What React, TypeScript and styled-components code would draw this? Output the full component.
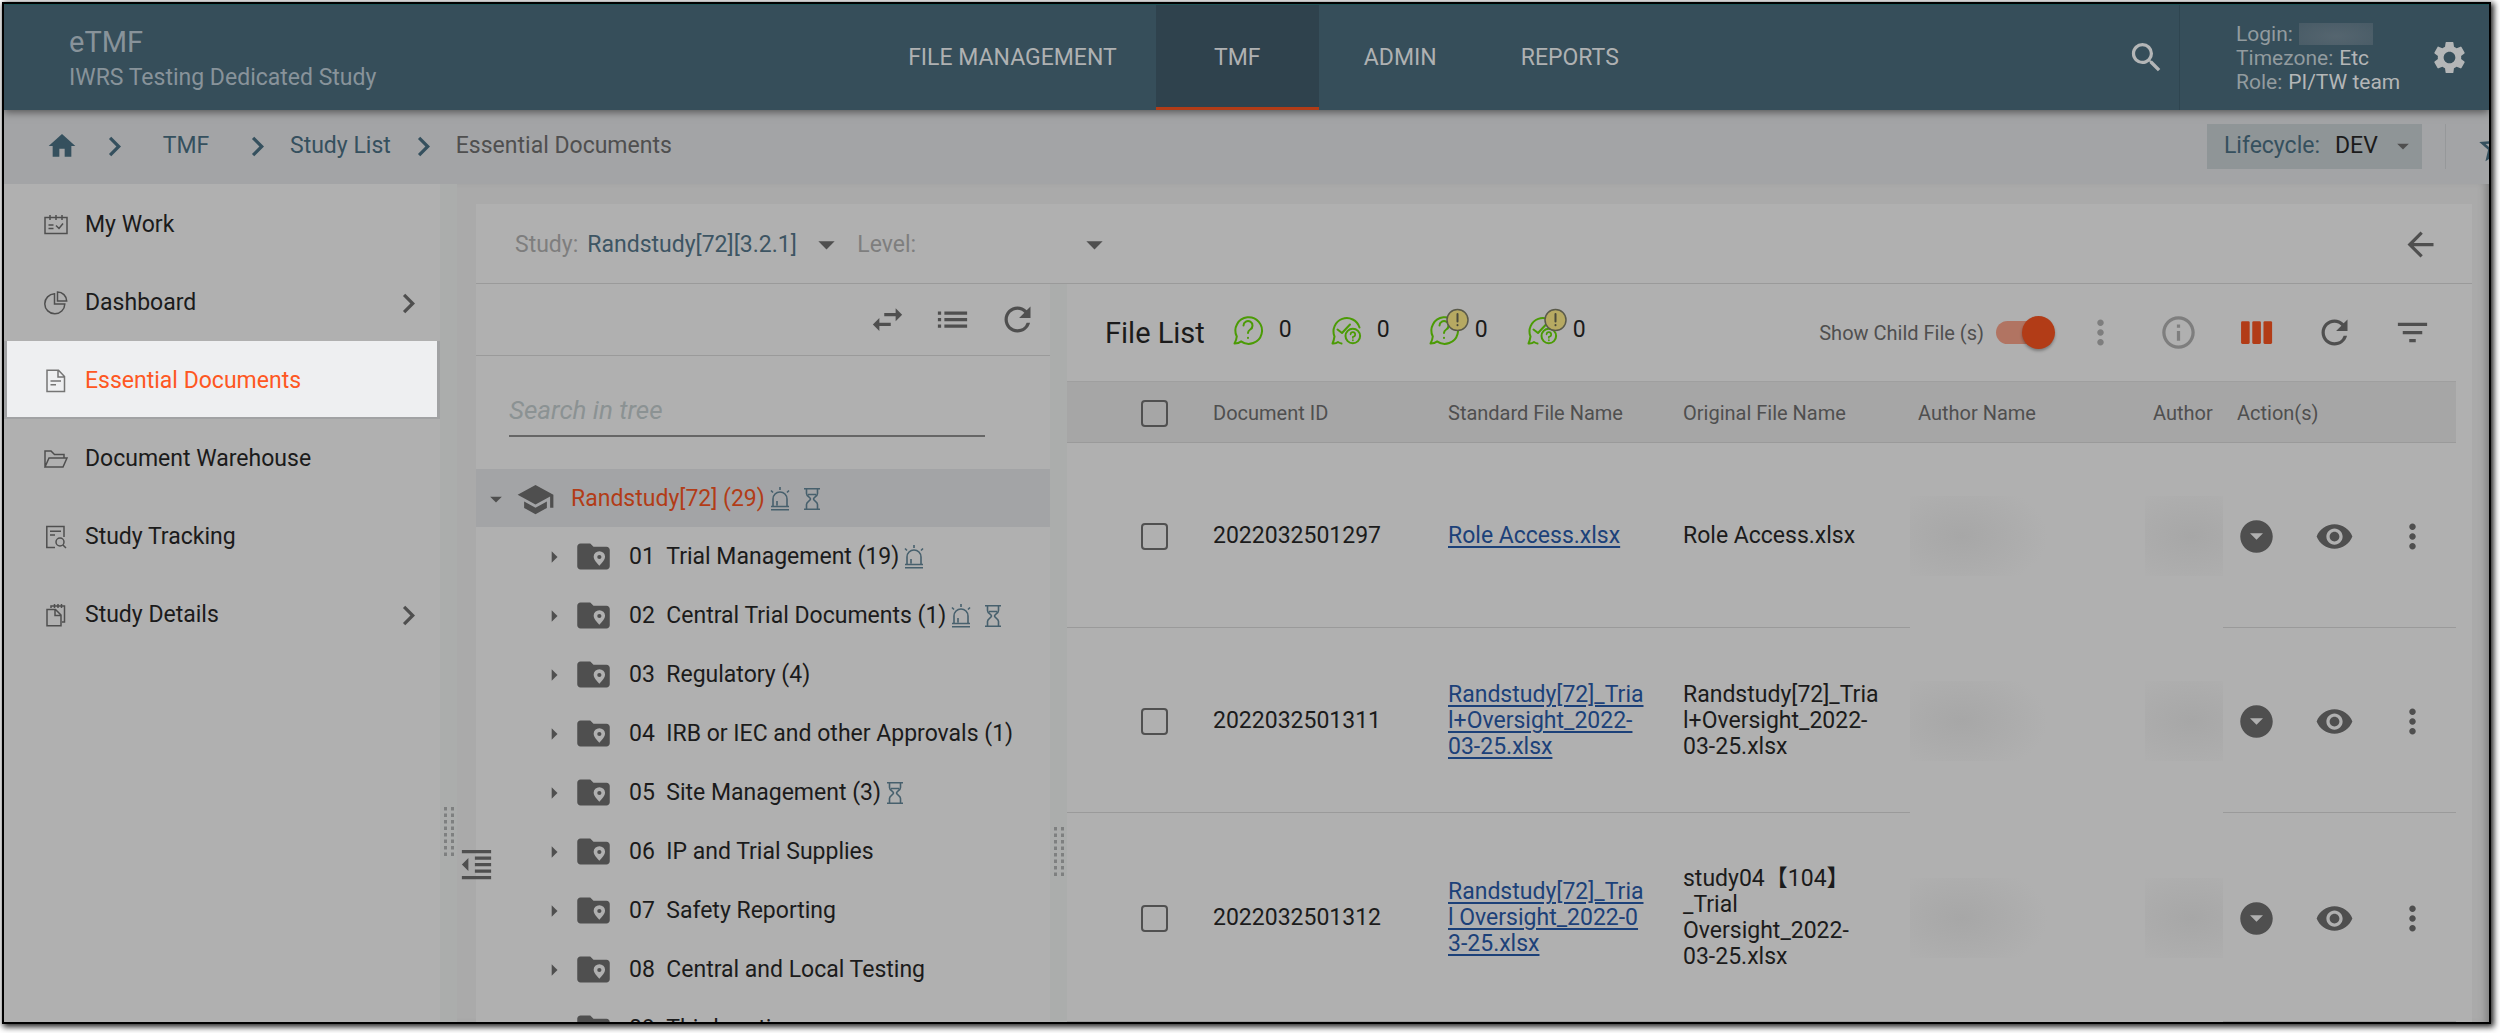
import React from 'react';
import styled, { createGlobalStyle, css } from 'styled-components';
import {
  MdArrowBack,
  MdArrowDropDown,
  MdArrowDropDownCircle,
  MdArrowRight,
  MdChevronRight,
  MdFilterList,
  MdFormatIndentDecrease,
  MdHome,
  MdInfoOutline,
  MdList,
  MdMoreVert,
  MdRefresh,
  MdSchool,
  MdSearch,
  MdSettings,
  MdStarBorder,
  MdSwapHoriz,
  MdVisibility,
} from 'react-icons/md';

const color = {
  header: '#364e5a',
  headerActive: '#2f424d',
  bar: '#a3a4a6',
  canvas: '#aaaaaa',
  surface: '#b0b0b0',
  splitter: '#abadac',
  tableHead: '#a6a6a6',
  line: '#9a9a9a',
  text: '#1b1b1b',
  muted: '#4f4f4f',
  faint: '#7e7e7e',
  teal: '#35505e',
  orange: '#b23c17',
  link: '#1c4179',
  green: '#4b9b05',
};

const ICON = 39;
const CARET = 28;

const GlobalStyle = createGlobalStyle`
  *, *::before, *::after { box-sizing: border-box; }
  body {
    margin: 0;
    background: #ffffff;
    overflow: hidden;
  }
  body, button, input, select {
    font-family: Roboto, "Noto Sans CJK SC", sans-serif;
    font-size: 23px;
    line-height: 26px;
    color: ${color.text};
  }
  ul, ol { list-style: none; margin: 0; padding: 0; }
  svg { display: block; flex: none; }
`;

/* ---------- shell ---------- */

const Frame = styled.div`
  display: flex;
  flex-direction: column;
  height: calc(100vh - 11px);
  margin: 2px 9px 9px 2px;
  border: 2px solid #000000;
  background: ${color.canvas};
  box-shadow: 2px 2px 6px 1px rgba(0, 0, 0, 0.85);
  overflow: hidden;
`;

const Header = styled.header`
  flex: none;
  position: relative;
  z-index: 1;
  display: grid;
  grid-template-columns: 51fr auto 49fr;
  height: 106px;
  background: ${color.header};
  border-top: 1px solid #1f5558;
  box-shadow: 0 2px 8px rgba(0, 0, 0, 0.5);
`;

const Brand = styled.div`
  display: flex;
  flex-direction: column;
  justify-content: center;
  padding: 3px 0 0 65px;
  color: #88939a;
`;

const BrandName = styled.div`
  font-size: 29px;
  line-height: 38px;
`;

const BrandStudy = styled.div`
  line-height: 34px;
`;

const Nav = styled.nav`
  display: flex;
`;

const NavLink = styled.a<{ $active?: boolean }>`
  display: flex;
  align-items: center;
  justify-content: center;
  min-width: 163px;
  padding: 4px 39px 0;
  border-bottom: 3px solid transparent;
  color: #afb1b2;
  text-decoration: none;
  ${(p) =>
    p.$active &&
    css`
      background: ${color.headerActive};
      border-bottom-color: ${color.orange};
    `}
`;

const HeaderTools = styled.div`
  display: flex;
  align-items: stretch;
  justify-content: flex-end;
  padding-right: 20px;
`;

const IconButton = styled.button<{ $tone?: string }>`
  display: flex;
  align-items: center;
  justify-content: center;
  flex: none;
  margin: 0;
  padding: 0;
  border: 0;
  background: none;
  color: ${(p) => p.$tone ?? color.muted};
  cursor: pointer;
`;

const UserInfo = styled.div`
  display: flex;
  flex-direction: column;
  justify-content: center;
  min-width: 251px;
  margin-left: 13px;
  padding-left: 56px;
  border-left: 1px solid #2f4550;
  font-size: 21px;
  line-height: 24px;
  color: #b4b6b7;
`;

const UserLine = styled.div`
  display: flex;
  gap: 6px;
  align-items: center;
`;

const UserKey = styled.span`
  color: #929b9f;
`;

const Redacted = styled.span`
  width: 74px;
  height: 22px;
  background: radial-gradient(ellipse at 50% 60%, #55656f, #46596400), #485b66;
`;

/* ---------- breadcrumb ---------- */

const CrumbBar = styled.div`
  flex: none;
  display: flex;
  align-items: center;
  justify-content: space-between;
  height: 74px;
  padding-bottom: 2px;
  background: ${color.bar};
  overflow: hidden;
`;

const Crumbs = styled.ol`
  display: flex;
  align-items: center;
  padding-left: 42px;
  color: ${color.teal};
`;

const Crumb = styled.li<{ $wide?: boolean; $current?: boolean }>`
  display: flex;
  justify-content: center;
  min-width: ${(p) => (p.$wide ? '104px' : '0')};
  padding: 0 13px;
  color: ${(p) => (p.$current ? color.muted : color.teal)};

  a {
    color: inherit;
    text-decoration: none;
  }
`;

const HomeCrumb = styled.li`
  padding-right: 17px;

  a {
    color: inherit;
  }
`;

const CrumbTools = styled.div`
  display: flex;
  align-items: center;
  margin-right: -26px;
`;

const Lifecycle = styled.label`
  display: flex;
  align-items: center;
  gap: 15px;
  height: 45px;
  padding: 0 5px 0 17px;
  background: #8f9597;
  color: ${color.teal};
`;

const Divider = styled.span`
  width: 1px;
  height: 45px;
  margin: 0 30px 0 23px;
  background: #96989a;
`;

const SelectBox = styled.span<{ $width: number }>`
  display: grid;
  align-items: center;
  width: ${(p) => p.$width}px;

  select,
  svg {
    grid-area: 1 / 1;
  }

  svg {
    justify-self: end;
    pointer-events: none;
    color: ${color.muted};
  }
`;

const Select = styled.select<{ $tone?: string }>`
  width: 100%;
  height: 39px;
  margin: 0;
  padding: 0;
  border: 0;
  appearance: none;
  background: none;
  color: ${(p) => p.$tone ?? color.text};
`;

/* ---------- side menu ---------- */

const Body = styled.div`
  flex: 1;
  display: flex;
  min-height: 0;
`;

const Side = styled.nav`
  flex: none;
  width: 436px;
  padding-top: 1px;
  background: ${color.surface};
`;

const SideItem = styled.li<{ $active?: boolean }>`
  height: 78px;
  padding: 0 3px 2px;
  background: ${(p) => (p.$active ? '#a1a2a4' : 'none')};
`;

const SideLink = styled.a<{ $active?: boolean }>`
  display: flex;
  align-items: center;
  height: 100%;
  padding: 4px 9px 0 37px;
  gap: 17px;
  color: ${(p) => (p.$active ? '#fe5722' : color.text)};
  background: ${(p) => (p.$active ? '#eeeff1' : 'none')};
  text-decoration: none;

  svg {
    color: ${(p) => (p.$active ? '#757575' : color.muted)};
  }
`;

const SideLabel = styled.span`
  flex: 1;
`;

const Splitter = styled.div<{ $bottom: number }>`
  flex: none;
  display: flex;
  align-items: flex-end;
  justify-content: center;
  width: 17px;
  padding-bottom: ${(p) => p.$bottom}px;
  background: ${color.splitter};
`;

/* ---------- content ---------- */

const Content = styled.main`
  flex: 1;
  position: relative;
  display: flex;
  min-width: 0;
  padding: 20px 17px 0 19px;
  box-shadow: inset -8px 0 10px -6px rgba(0, 0, 0, 0.3);
`;

const CollapseButton = styled(IconButton)`
  position: absolute;
  left: 0;
  bottom: 138px;
`;

const Panel = styled.section`
  flex: 1;
  display: flex;
  flex-direction: column;
  min-width: 0;
  background: ${color.surface};
`;

const StudyBar = styled.div`
  flex: none;
  display: flex;
  align-items: center;
  height: 80px;
  padding: 2px 32px 0 39px;
  border-bottom: 1px solid ${color.line};
`;

const Field = styled.label`
  display: flex;
  align-items: center;
  gap: 9px;
  margin-right: 11px;
  color: ${color.faint};
`;

const BackSlot = styled.div`
  margin-left: auto;
`;

const Columns = styled.div`
  flex: 1;
  display: flex;
  min-height: 0;
`;

const TreePane = styled.div`
  flex: none;
  width: 574px;
  overflow: hidden;
`;

const TreeTools = styled.div`
  display: flex;
  align-items: center;
  justify-content: flex-end;
  gap: 26px;
  height: 72px;
  padding-right: 13px;
  border-bottom: 1px solid ${color.line};
`;

const TreeSearch = styled.div`
  padding: 29px 65px 32px 33px;
`;

const SearchInput = styled.input`
  display: block;
  width: 100%;
  height: 52px;
  padding: 0;
  border: 0;
  border-bottom: 2px solid #666666;
  background: none;
  font-size: 26px;
  outline: none;

  &::placeholder {
    color: #8b9293;
    font-style: italic;
    opacity: 1;
  }
`;

const TreeRow = styled.div<{ $root?: boolean }>`
  display: flex;
  align-items: center;
  height: ${(p) => (p.$root ? 58 : 59)}px;
  padding: ${(p) => (p.$root ? '2px 0 0 6px' : '0 0 0 64px')};
  background: ${(p) => (p.$root ? color.bar : 'none')};
  color: ${(p) => (p.$root ? color.orange : color.text)};
  white-space: nowrap;

  svg {
    color: ${color.muted};
  }
`;

const TreeIcon = styled.span`
  margin: 0 16px 0 6px;
`;

const TreeMarks = styled.span`
  display: flex;
  gap: 13px;
  margin-left: 5px;

  svg {
    color: #47606d;
  }
`;

/* ---------- file list ---------- */

const FilePane = styled.div`
  flex: 1;
  min-width: 0;
  overflow: hidden;
`;

const FileTools = styled.div`
  display: flex;
  align-items: center;
  height: 97px;
  padding: 0 40px 0 38px;
`;

const FileTitle = styled.h2`
  margin: 0 28px 0 0;
  font-size: 29px;
  line-height: 34px;
  font-weight: 400;
`;

const QueryCounts = styled.ul`
  display: flex;
  gap: 39px;
  flex: 1;
  padding-bottom: 6px;
`;

const QueryCount = styled.li`
  display: flex;
  align-items: center;
  gap: 16px;
`;

const BubbleIcon = styled.svg`
  overflow: visible;
  fill: none;
  stroke: ${color.green};
  stroke-width: 2;
  stroke-linecap: round;
  stroke-linejoin: round;
`;

const ChildToggle = styled.label`
  display: flex;
  align-items: center;
  gap: 12px;
  margin-right: 26px;
  font-size: 20px;
  color: ${color.muted};
`;

const Switch = styled.input`
  position: relative;
  width: 59px;
  height: 33px;
  margin: 0;
  appearance: none;

  &::before {
    content: '';
    position: absolute;
    inset: 5px 2px 5px 0;
    border-radius: 12px;
    background: #b17462;
  }

  &::after {
    content: '';
    position: absolute;
    top: 0;
    right: 0;
    width: 33px;
    height: 33px;
    border-radius: 50%;
    background: ${color.orange};
    box-shadow: 0 2px 3px rgba(0, 0, 0, 0.3);
  }
`;

const ToolGroup = styled.div`
  display: flex;
  gap: 39px;
`;

const TableWrap = styled.div`
  padding-right: 16px;
`;

const Table = styled.table`
  width: 100%;
  table-layout: fixed;
  border-collapse: separate;
  border-spacing: 0;
`;

const Th = styled.th<{ $width?: number; $pad?: number }>`
  width: ${(p) => (p.$width ? `${p.$width}px` : 'auto')};
  height: 62px;
  padding: 2px 0 0 ${(p) => p.$pad ?? 8}px;
  background: ${color.tableHead};
  border-top: 1px solid #9f9f9f;
  border-bottom: 1px solid ${color.line};
  color: ${color.muted};
  font-size: 20px;
  font-weight: 400;
  text-align: left;
  white-space: nowrap;
`;

const Td = styled.td<{ $pad?: number; $blank?: boolean }>`
  height: 185px;
  padding: 53px 0 51px ${(p) => p.$pad ?? 8}px;
  border-bottom: 1px solid ${(p) => (p.$blank ? 'transparent' : color.line)};
  vertical-align: middle;
  white-space: pre-line;
`;

const Check = styled.input`
  display: block;
  width: 27px;
  height: 27px;
  margin: 0;
  appearance: none;
  border: 2px solid #505050;
  border-radius: 4px;
`;

const FileLink = styled.a`
  color: ${color.link};
  text-decoration: underline;
  text-underline-offset: 3px;
  text-decoration-thickness: 2px;
`;

const Smudge = styled.span<{ $late?: boolean }>`
  display: block;
  height: 80px;
  background: radial-gradient(
    ellipse 86px 54px at ${(p) => (p.$late ? '60% 50%' : '22% 50%')},
    #a7a7a7,
    #b0b0b0
  );
`;

const Actions = styled.div`
  display: flex;
  gap: 39px;
`;

/* ---------- drawings ---------- */

const Outline = styled.svg.attrs({ width: 24, height: 24, viewBox: '0 0 24 24' })`
  fill: none;
  stroke: currentColor;
  stroke-width: 1.5;
`;

const WorkIcon = () => (
  <Outline>
    <path d="M1 4.5h22v16H1zM6 2v5M12 2v5M18 2v5M4.5 12h5M4.5 15.5h5M12 12.5l3 3 4-5" />
  </Outline>
);

const PieIcon = () => (
  <Outline>
    <path d="M10.5 2.8A10 10 0 1 0 20.8 13H10.5zM13.5 1v9h9.2A9.2 9.2 0 0 0 13.5 1z" />
  </Outline>
);

const DocIcon = () => (
  <Outline>
    <path d="M3 1.2h11.500l6 6.300v15H3zM14 1.500v6.500h6.500M6.500 12h10.500M6.500 15.800h5.500" />
  </Outline>
);

const FolderOpenIcon = () => (
  <Outline>
    <path d="M1 20V4h6l3.500 3.500H20V11M1 20l4-9h18l-4 9z" />
  </Outline>
);

const TrackingIcon = () => (
  <Outline>
    <path d="M20 12V1.500H2.800v21H11M6 6.200h11M6 10h5" />
    <circle cx="16" cy="17" r="4" />
    <path d="M19 20l3 3" />
  </Outline>
);

const DetailsIcon = () => (
  <Outline>
    <path d="M7 5V3h13.500v16H18M10.500 1v4M14 1v4M17.500 1v4" />
    <path d="M3 6.500h8.500l5.500 5.500v10.800H3zM11 7v5.500h5.800" />
  </Outline>
);

const GripDots = () => (
  <svg width="10" height="49" viewBox="0 0 10 49" fill="#7e8080">
    {Array.from({ length: 8 }, (_, i) => (
      <g key={i}>
        <rect x="0" y={i * 6.5} width="3" height="3.5" />
        <rect x="7" y={i * 6.5} width="3" height="3.5" />
      </g>
    ))}
  </svg>
);

const StudyFolderIcon = () => (
  <svg width={ICON} height={ICON} viewBox="0 0 24 24" fill="currentColor">
    <path
      fillRule="evenodd"
      d="M10 4H4c-1.100 0-2 .9-2 2v12c0 1.100.9 2 2 2h16c1.100 0 2-.9 2-2V8c0-1.100-.9-2-2-2h-8l-2-2zM15.600 8.700a3.500 3.500 0 0 1 3.500 3.500c0 2.300-3.500 5.500-3.500 5.500s-3.500-3.200-3.500-5.500a3.500 3.500 0 0 1 3.500-3.500zM15.600 11a1.300 1.300 0 1 0 0 2.600 1.300 1.300 0 0 0 0-2.600z"
    />
  </svg>
);

const SirenIcon = () => (
  <svg width="20" height="24" viewBox="0 0 20 24" fill="none" stroke="currentColor" strokeWidth="1.6">
    <path d="M3 19v-7a7 7 0 0 1 14 0v7M1 19.500h18M1 22.800h18M10 0v3M1 3.500l2 2M19 3.500l-2 2M7 18.500V14" />
  </svg>
);

const HourglassIcon = () => (
  <svg width="18" height="24" viewBox="0 0 18 24" fill="none" stroke="currentColor" strokeWidth="1.6">
    <path d="M1 1.800h16M1 22.200h16M3.500 2v4.500c0 3 4 3.500 4 5.500s-4 2.500-4 5.500V22M14.500 2v4.500c0 3-4 3.500-4 5.500s4 2.500 4 5.500V22M5 7.500h8" />
  </svg>
);

const ColumnsIcon = () => (
  <svg width={ICON} height={ICON} viewBox="0 0 24 24" fill="currentColor">
    <rect x="2.500" y="5" width="5.300" height="14" rx="0.800" />
    <rect x="9.400" y="5" width="5.300" height="14" rx="0.800" />
    <rect x="16.300" y="5" width="5.300" height="14" rx="0.800" />
  </svg>
);

const QueryIcon = ({ answered, alert }: { answered?: boolean; alert?: boolean }) => (
  <BubbleIcon width="30" height="30" viewBox="0 0 30 30">
    {answered ? (
      <>
        <path d="M28.500 12.500A13.300 13.300 0 1 0 3.500 21.500C3 24.500 2.500 26.500 1.500 28.500c2.500.2 4-.2 5.500-1.500 1.200.8 2 1.300 3.500 1.500" />
        <path d="M6.500 14.500l4.500 3.500 8-8.500" />
        <circle cx="21.800" cy="21" r="7.300" />
        <path d="M19.600 19.300a2.300 2.300 0 1 1 2.300 2.500v1M21.900 25.200v.1" strokeWidth="1.700" />
      </>
    ) : (
      <>
        <path d="M3.800 21.500A13.300 13.300 0 1 1 8 26.400C6 28.300 4 28.500 1.500 28.500C2.500 26.500 3.500 24.500 3.800 21.500z" />
        <path d="M10.500 10.500a4.500 4.500 0 1 1 6.700 4c-1.700 1-2.200 1.700-2.200 3.500M15 22.800v.1" />
      </>
    )}
    {alert && (
      <g>
        <circle cx="28.500" cy="5" r="10.500" fill="#b6a962" stroke="#5a5a4a" strokeWidth="1.500" />
        <path d="M28.500-1v7.500M28.500 10v.2" stroke="#4a4a3c" />
      </g>
    )}
  </BubbleIcon>
);

/* ---------- data ---------- */

const menu = [
  { label: 'My Work', icon: <WorkIcon /> },
  { label: 'Dashboard', icon: <PieIcon />, expandable: true },
  { label: 'Essential Documents', icon: <DocIcon />, active: true },
  { label: 'Document Warehouse', icon: <FolderOpenIcon /> },
  { label: 'Study Tracking', icon: <TrackingIcon /> },
  { label: 'Study Details', icon: <DetailsIcon />, expandable: true },
];

const folders = [
  { code: '01', name: 'Trial Management (19)', siren: true },
  { code: '02', name: 'Central Trial Documents (1)', siren: true, waiting: true },
  { code: '03', name: 'Regulatory (4)' },
  { code: '04', name: 'IRB or IEC and other Approvals (1)' },
  { code: '05', name: 'Site Management (3)', waiting: true },
  { code: '06', name: 'IP and Trial Supplies' },
  { code: '07', name: 'Safety Reporting' },
  { code: '08', name: 'Central and Local Testing' },
  { code: '09', name: 'Third parties' },
];

const files = [
  { id: '2022032501297', standard: 'Role Access.xlsx', original: 'Role Access.xlsx' },
  {
    id: '2022032501311',
    standard: 'Randstudy[72]_Tria\nl+Oversight_2022-\n03-25.xlsx',
    original: 'Randstudy[72]_Tria\nl+Oversight_2022-\n03-25.xlsx',
  },
  {
    id: '2022032501312',
    standard: 'Randstudy[72]_Tria\nl Oversight_2022-0\n3-25.xlsx',
    original: 'study04【104】\n_Trial\nOversight_2022-\n03-25.xlsx',
  },
];

const queries = [
  { name: 'Open queries' },
  { name: 'Answered queries', answered: true },
  { name: 'Overdue open queries', alert: true },
  { name: 'Overdue answered queries', answered: true, alert: true },
];

/* ---------- page ---------- */

const TopBar = () => (
  <Header>
    <Brand>
      <BrandName>eTMF</BrandName>
      <BrandStudy>IWRS Testing Dedicated Study</BrandStudy>
    </Brand>
    <Nav>
      {['FILE MANAGEMENT', 'TMF', 'ADMIN', 'REPORTS'].map((item) => (
        <NavLink key={item} href="#" $active={item === 'TMF'}>
          {item}
        </NavLink>
      ))}
    </Nav>
    <HeaderTools>
      <IconButton aria-label="Search" $tone="#b4b6b7">
        <MdSearch size={ICON} />
      </IconButton>
      <UserInfo>
        <UserLine>
          <UserKey>Login:</UserKey>
          <Redacted />
        </UserLine>
        <UserLine>
          <UserKey>Timezone:</UserKey>Etc
        </UserLine>
        <UserLine>
          <UserKey>Role:</UserKey>PI/TW team
        </UserLine>
      </UserInfo>
      <IconButton aria-label="Settings" $tone="#b4b6b7">
        <MdSettings size={ICON} />
      </IconButton>
    </HeaderTools>
  </Header>
);

const BreadcrumbBar = () => (
  <CrumbBar>
    <Crumbs>
      <HomeCrumb>
        <a href="#" aria-label="Home">
          <MdHome size={32} />
        </a>
      </HomeCrumb>
      <MdChevronRight size={ICON} />
      <Crumb $wide>
        <a href="#">TMF</a>
      </Crumb>
      <MdChevronRight size={ICON} />
      <Crumb>
        <a href="#">Study List</a>
      </Crumb>
      <MdChevronRight size={ICON} />
      <Crumb $current>Essential Documents</Crumb>
    </Crumbs>
    <CrumbTools>
      <Lifecycle>
        Lifecycle:
        <SelectBox $width={82}>
          <Select defaultValue="DEV">
            <option>DEV</option>
          </Select>
          <MdArrowDropDown size={CARET} />
        </SelectBox>
      </Lifecycle>
      <Divider />
      <IconButton aria-label="Favourite" $tone={color.teal}>
        <MdStarBorder size={ICON} />
      </IconButton>
    </CrumbTools>
  </CrumbBar>
);

const SideMenu = () => (
  <Side>
    <ul>
      {menu.map((item) => (
        <SideItem key={item.label} $active={item.active}>
          <SideLink href="#" $active={item.active}>
            {item.icon}
            <SideLabel>{item.label}</SideLabel>
            {item.expandable && <MdChevronRight size={ICON} />}
          </SideLink>
        </SideItem>
      ))}
    </ul>
  </Side>
);

const Tree = () => (
  <TreePane>
    <TreeTools>
      <IconButton aria-label="Switch view">
        <MdSwapHoriz size={ICON} />
      </IconButton>
      <IconButton aria-label="List view">
        <MdList size={ICON} />
      </IconButton>
      <IconButton aria-label="Refresh tree">
        <MdRefresh size={ICON} />
      </IconButton>
    </TreeTools>
    <TreeSearch>
      <SearchInput aria-label="Search in tree" placeholder="Search in tree" />
    </TreeSearch>
    <TreeRow $root>
      <MdArrowDropDown size={CARET} />
      <TreeIcon>
        <MdSchool size={ICON} />
      </TreeIcon>
      Randstudy[72] (29)
      <TreeMarks>
        <SirenIcon />
        <HourglassIcon />
      </TreeMarks>
    </TreeRow>
    <ul>
      {folders.map((folder) => (
        <li key={folder.code}>
          <TreeRow>
            <MdArrowRight size={CARET} />
            <TreeIcon>
              <StudyFolderIcon />
            </TreeIcon>
            {folder.code}&nbsp;&nbsp;{folder.name}
            <TreeMarks>
              {folder.siren && <SirenIcon />}
              {folder.waiting && <HourglassIcon />}
            </TreeMarks>
          </TreeRow>
        </li>
      ))}
    </ul>
  </TreePane>
);

const FileList = () => (
  <FilePane>
    <FileTools>
      <FileTitle>File List</FileTitle>
      <QueryCounts>
        {queries.map((query) => (
          <QueryCount key={query.name}>
            <QueryIcon answered={query.answered} alert={query.alert} />0
          </QueryCount>
        ))}
      </QueryCounts>
      <ChildToggle>
        Show Child File (s)
        <Switch type="checkbox" role="switch" defaultChecked />
      </ChildToggle>
      <ToolGroup>
        <IconButton aria-label="More" $tone={color.faint}>
          <MdMoreVert size={ICON} />
        </IconButton>
        <IconButton aria-label="Information" $tone={color.faint}>
          <MdInfoOutline size={ICON} />
        </IconButton>
        <IconButton aria-label="Columns" $tone={color.orange}>
          <ColumnsIcon />
        </IconButton>
        <IconButton aria-label="Refresh files">
          <MdRefresh size={ICON} />
        </IconButton>
        <IconButton aria-label="Filter">
          <MdFilterList size={ICON} />
        </IconButton>
      </ToolGroup>
    </FileTools>
    <TableWrap>
      <Table>
        <thead>
          <tr>
            <Th $width={138} $pad={74}>
              <Check type="checkbox" aria-label="Select all files" />
            </Th>
            <Th $width={235}>Document ID</Th>
            <Th $width={235}>Standard File Name</Th>
            <Th $width={235}>Original File Name</Th>
            <Th $width={235}>Author Name</Th>
            <Th>Author</Th>
            <Th $width={233} $pad={14}>
              Action(s)
            </Th>
          </tr>
        </thead>
        <tbody>
          {files.map((file) => (
            <tr key={file.id}>
              <Td $pad={74}>
                <Check type="checkbox" aria-label={`Select ${file.id}`} />
              </Td>
              <Td>{file.id}</Td>
              <Td>
                <FileLink href="#">{file.standard}</FileLink>
              </Td>
              <Td>{file.original}</Td>
              <Td $pad={0} $blank>
                <Smudge />
              </Td>
              <Td $pad={0} $blank>
                <Smudge $late />
              </Td>
              <Td $pad={14}>
                <Actions>
                  <IconButton aria-label="Open actions">
                    <MdArrowDropDownCircle size={ICON} />
                  </IconButton>
                  <IconButton aria-label="View file">
                    <MdVisibility size={ICON} />
                  </IconButton>
                  <IconButton aria-label="More">
                    <MdMoreVert size={ICON} />
                  </IconButton>
                </Actions>
              </Td>
            </tr>
          ))}
        </tbody>
      </Table>
    </TableWrap>
  </FilePane>
);

export default function App() {
  return (
    <>
      <GlobalStyle />
      <Frame>
        <TopBar />
        <BreadcrumbBar />
        <Body>
          <SideMenu />
          <Splitter $bottom={166}>
            <GripDots />
          </Splitter>
          <Content>
            <Panel>
              <StudyBar>
                <Field>
                  Study:
                  <SelectBox $width={259}>
                    <Select $tone="#3d5563" defaultValue="Randstudy[72][3.2.1]">
                      <option>Randstudy[72][3.2.1]</option>
                    </Select>
                    <MdArrowDropDown size={ICON} />
                  </SelectBox>
                </Field>
                <Field>
                  Level:
                  <SelectBox $width={189}>
                    <Select defaultValue="">
                      <option value="" />
                    </Select>
                    <MdArrowDropDown size={ICON} />
                  </SelectBox>
                </Field>
                <BackSlot>
                  <IconButton aria-label="Back">
                    <MdArrowBack size={ICON} />
                  </IconButton>
                </BackSlot>
              </StudyBar>
              <Columns>
                <Tree />
                <Splitter $bottom={146}>
                  <GripDots />
                </Splitter>
                <FileList />
              </Columns>
            </Panel>
            <CollapseButton aria-label="Collapse menu">
              <MdFormatIndentDecrease size={ICON} />
            </CollapseButton>
          </Content>
        </Body>
      </Frame>
    </>
  );
}
